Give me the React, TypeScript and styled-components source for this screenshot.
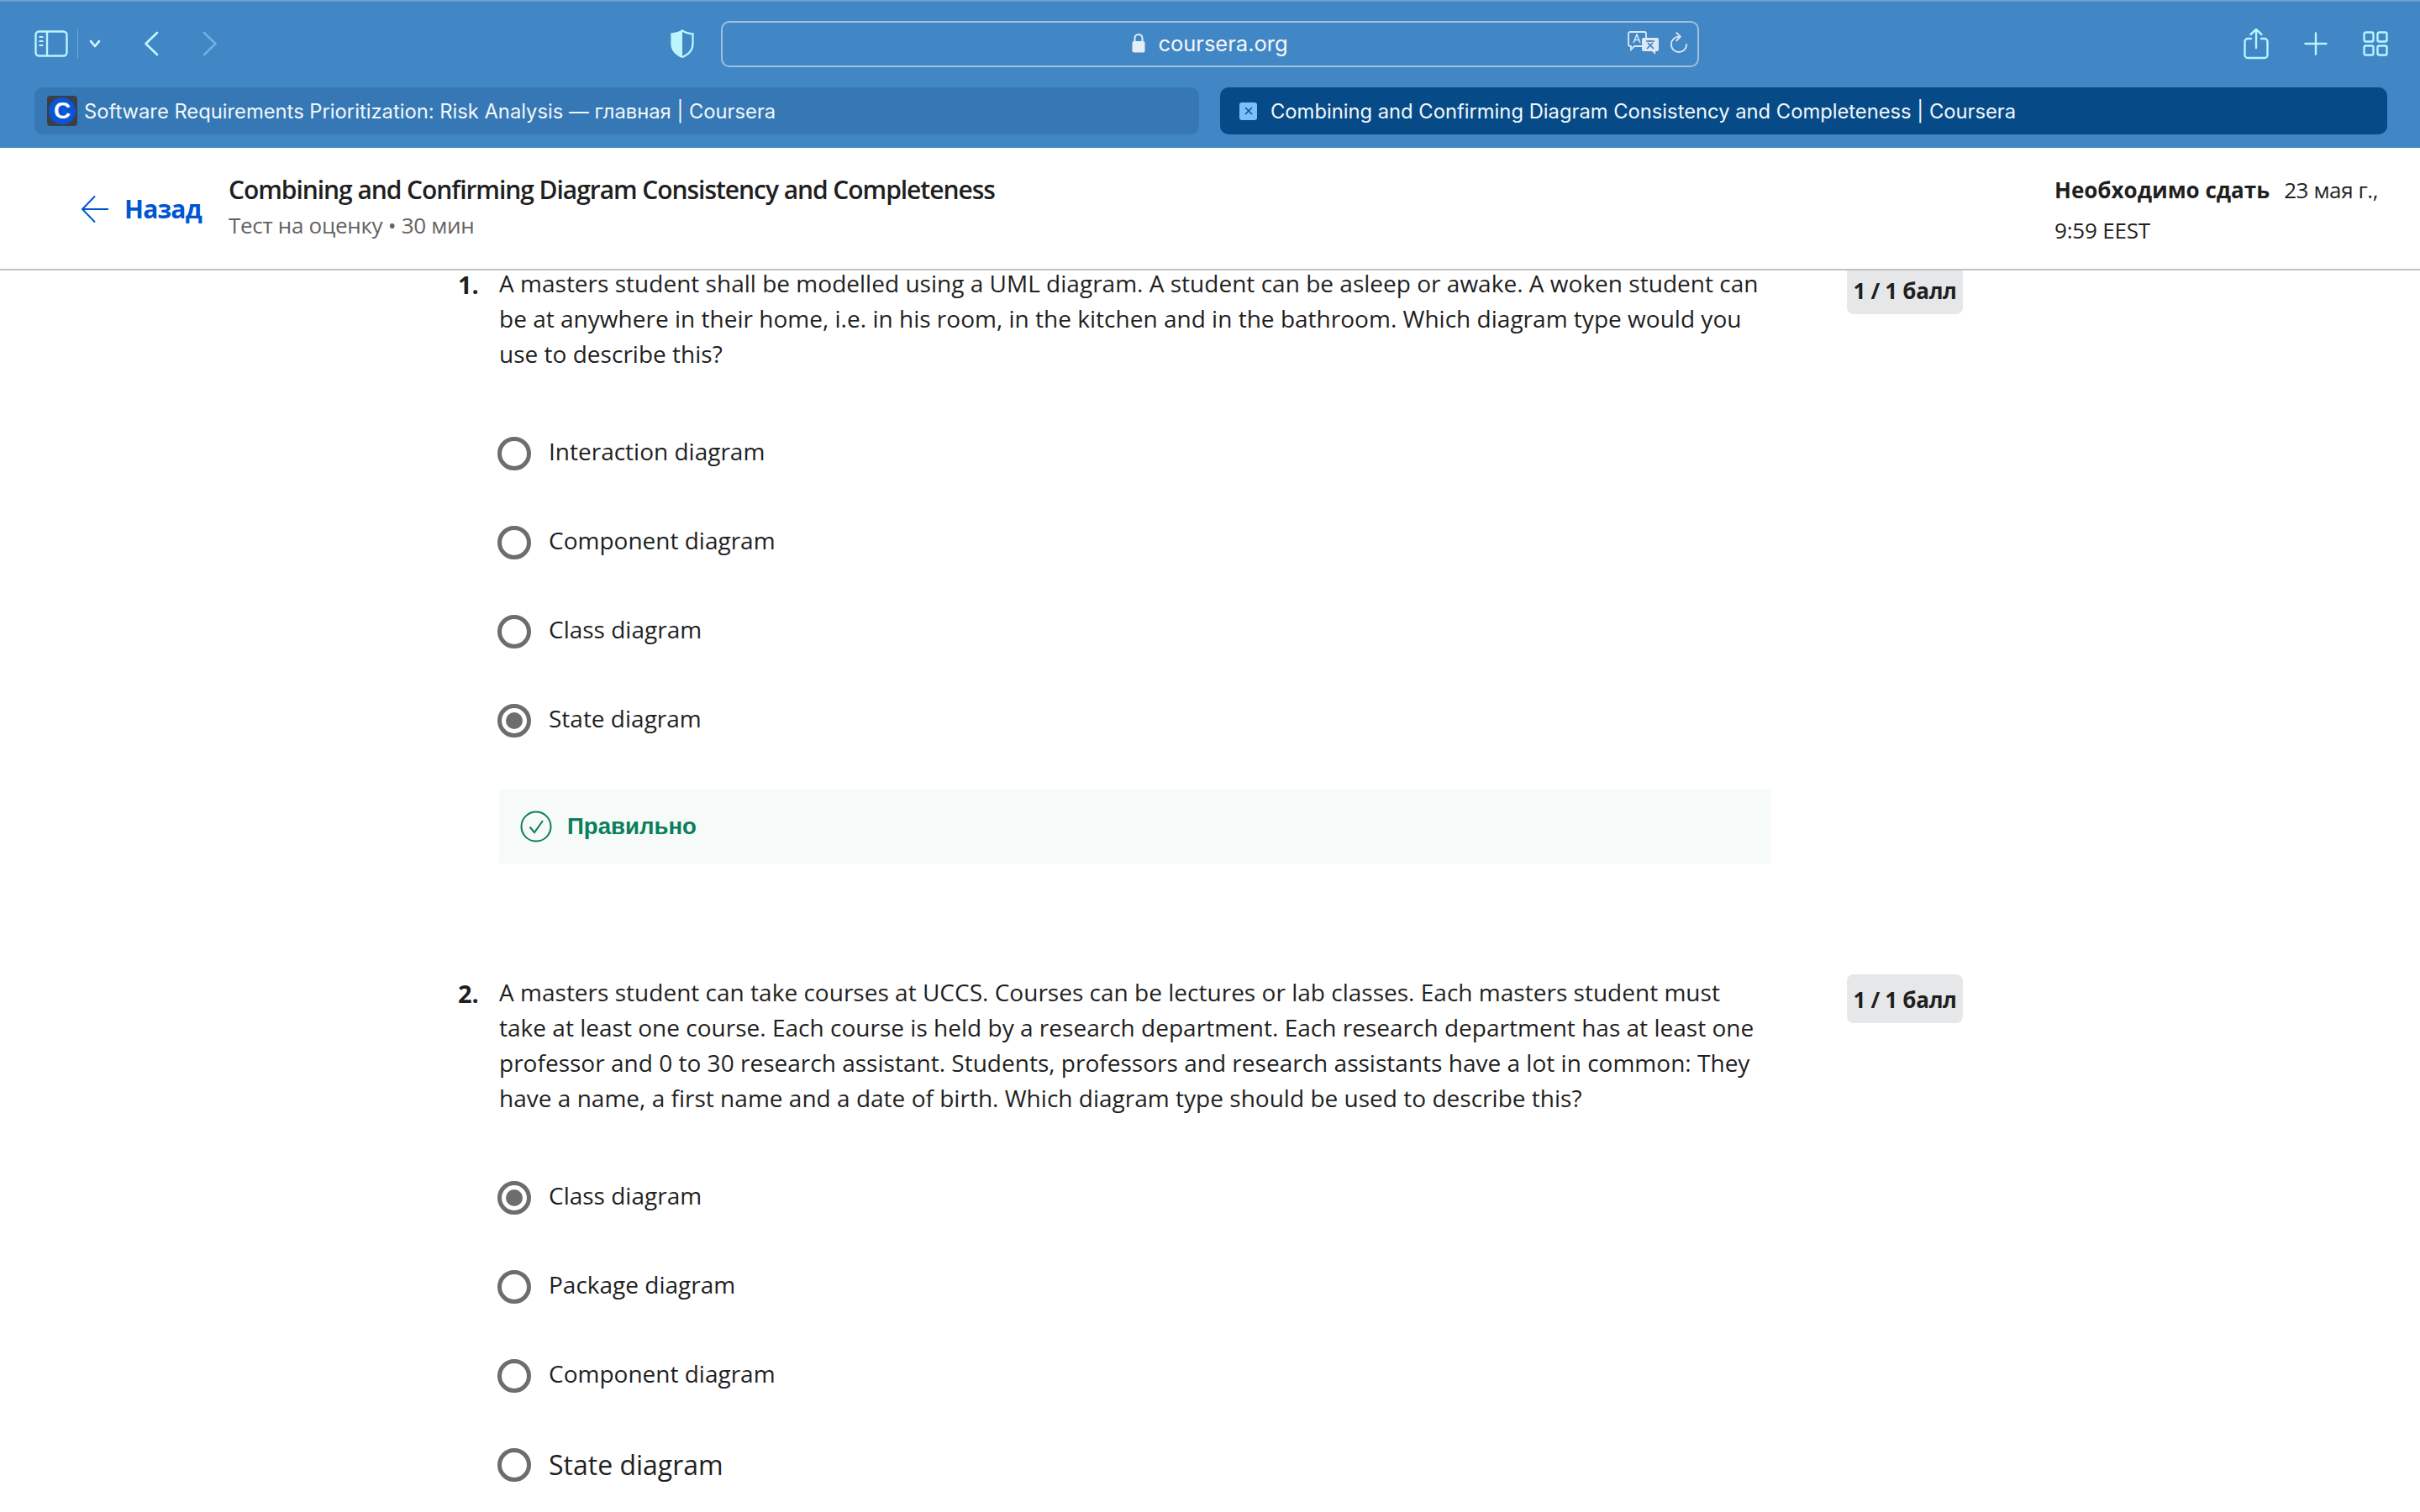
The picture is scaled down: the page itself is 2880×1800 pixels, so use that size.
import React from 'react';
import styled, { createGlobalStyle } from 'styled-components';

const GlobalStyle = createGlobalStyle`
  html, body {
    margin: 0;
    padding: 0;
    background: #fff;
  }
  * {
    box-sizing: border-box;
  }
`;

type Choice = { label: string; selected?: boolean; large?: boolean };

type QuestionData = {
  number: string;
  lines: string[];
  choices: Choice[];
  correct?: boolean;
};

const questions: QuestionData[] = [
  {
    number: '1.',
    lines: [
      'A masters student shall be modelled using a UML diagram. A student can be asleep or awake. A woken student can',
      'be at anywhere in their home, i.e. in his room, in the kitchen and in the bathroom. Which diagram type would you',
      'use to describe this?',
    ],
    choices: [
      { label: 'Interaction diagram' },
      { label: 'Component diagram' },
      { label: 'Class diagram' },
      { label: 'State diagram', selected: true },
    ],
    correct: true,
  },
  {
    number: '2.',
    lines: [
      'A masters student can take courses at UCCS. Courses can be lectures or lab classes. Each masters student must',
      'take at least one course. Each course is held by a research department. Each research department has at least one',
      'professor and 0 to 30 research assistant. Students, professors and research assistants have a lot in common: They',
      'have a name, a first name and a date of birth. Which diagram type should be used to describe this?',
    ],
    choices: [
      { label: 'Class diagram', selected: true },
      { label: 'Package diagram' },
      { label: 'Component diagram' },
      { label: 'State diagram', large: true },
    ],
  },
];

const App: React.FC = () => (
  <Page>
    <GlobalStyle />
    <Chrome>
      <Toolbar>
        <ToolGroup>
          <svg width="40" height="32" viewBox="0 0 40 32" fill="none" stroke="#b8f4ff" strokeWidth="2.4">
            <rect x="1.5" y="1.5" width="37" height="29" rx="4" />
            <path d="M15 2v28" />
            <path d="M5.5 8h5M5.5 13h5M5.5 18h5" strokeWidth="2" />
          </svg>
          <ToolDivider />
          <svg width="14" height="10" viewBox="0 0 14 10" fill="none" stroke="#d8f8ff" strokeWidth="2.6" strokeLinecap="round" strokeLinejoin="round">
            <path d="M2 2l5 6 5-6" />
          </svg>
          <NavIcon width="18" height="30" viewBox="0 0 18 30" fill="none" stroke="#c4f5ff" strokeWidth="2.6" strokeLinecap="round" strokeLinejoin="round">
            <path d="M16 2L2.5 15 16 28" />
          </NavIcon>
          <NavIcon $forward width="18" height="30" viewBox="0 0 18 30" fill="none" stroke="#6fb0e4" strokeWidth="2.6" strokeLinecap="round" strokeLinejoin="round">
            <path d="M2 2l13.5 13L2 28" />
          </NavIcon>
        </ToolGroup>
        <ShieldSlot>
          <svg width="28" height="34" viewBox="0 0 28 34">
            <path d="M14 1.5c3.5 2.4 7.5 3.5 12.5 3.8v12C26.500 25 21 30 14 33 7 30 1.500 25 1.500 17.300V5.300C6.500 5 10.500 3.900 14 1.500z" fill="none" stroke="#bdf5ff" strokeWidth="2.2" />
            <path d="M14 1.500C10.500 3.900 6.500 5 1.500 5.300v12C1.500 25 7 30 14 33z" fill="#bdf5ff" />
          </svg>
        </ShieldSlot>
        <AddressBar>
          <AddressCenter>
            <svg width="16" height="24" viewBox="0 0 16 24">
              <path d="M3.500 11V6.500a4.500 4.500 0 0 1 9 0V11" fill="none" stroke="#e3eef8" strokeWidth="2" />
              <rect x="0.500" y="10" width="15" height="13.500" rx="2" fill="#e3eef8" />
            </svg>
            <AddressText>coursera.org</AddressText>
          </AddressCenter>
          <AddressActions>
            <svg width="38" height="28" viewBox="0 0 38 28">
              <path d="M3 1h17a2 2 0 0 1 2 2v13a2 2 0 0 1-2 2H8l-4 4v-4H3a2 2 0 0 1-2-2V3a2 2 0 0 1 2-2z" fill="none" stroke="#dbe9f6" strokeWidth="1.800" />
              <path d="M7 14l4-10 4 10M8.500 10.500h5" fill="none" stroke="#dbe9f6" strokeWidth="1.500" />
              <path d="M19 8h16a2 2 0 0 1 2 2v12a2 2 0 0 1-2 2h-2v4l-4-4H19a2 2 0 0 1-2-2V10a2 2 0 0 1 2-2z" fill="#dbe9f6" />
              <path d="M22 12h10M27 11v2M23 21l7-7M24 14l7 7" fill="none" stroke="#3c78b0" strokeWidth="1.500" />
            </svg>
            <svg width="22" height="26" viewBox="0 0 24 28" fill="none" stroke="#dbe9f6" strokeWidth="2" strokeLinecap="round" strokeLinejoin="round">
              <path d="M12 6a10 10 0 1 0 10 10" />
              <path d="M9 1l5 5-5 5" />
            </svg>
          </AddressActions>
        </AddressBar>
        <ToolGroupRight>
          <svg width="30" height="38" viewBox="0 0 30 38" fill="none" stroke="#b8f4ff" strokeWidth="2.400" strokeLinecap="round" strokeLinejoin="round">
            <path d="M9 13H5a3.500 3.500 0 0 0-3.500 3.500v16A3.500 3.500 0 0 0 5 36h20a3.500 3.500 0 0 0 3.500-3.500v-16A3.500 3.500 0 0 0 25 13h-4" />
            <path d="M15 24V2M8.500 8L15 2l6.500 6" />
          </svg>
          <svg width="28" height="28" viewBox="0 0 28 28" fill="none" stroke="#b8f4ff" strokeWidth="2.400" strokeLinecap="round">
            <path d="M14 1.500v25M1.500 14h25" />
          </svg>
          <svg width="30" height="30" viewBox="0 0 30 30" fill="none" stroke="#b8f4ff" strokeWidth="2.400">
            <rect x="1.500" y="1.500" width="11" height="11" rx="2" />
            <rect x="17.500" y="1.500" width="11" height="11" rx="2" />
            <rect x="1.500" y="17.500" width="11" height="11" rx="2" />
            <rect x="17.500" y="17.500" width="11" height="11" rx="2" />
          </svg>
        </ToolGroupRight>
      </Toolbar>
      <TabBar>
        <Tab>
          <CourseraFavicon>
            <span>C</span>
          </CourseraFavicon>
          <TabLabel>Software Requirements Prioritization: Risk Analysis — главная | Coursera</TabLabel>
        </Tab>
        <Tab $active>
          <ClosedFavicon>
            <svg width="12" height="12" viewBox="0 0 12 12" fill="none" stroke="#20507f" strokeWidth="1.600">
              <path d="M2 2l8 8M10 2l-8 8" />
            </svg>
          </ClosedFavicon>
          <TabLabel>Combining and Confirming Diagram Consistency and Completeness | Coursera</TabLabel>
        </Tab>
      </TabBar>
    </Chrome>

    <Header>
      <BackLink>
        <svg width="34" height="34" viewBox="0 0 34 34" fill="none" stroke="#0056d2" strokeWidth="2">
          <path d="M17 1.500L2 17l15 15.500M2 17h31" />
        </svg>
        <BackLabel>Назад</BackLabel>
      </BackLink>
      <TitleBlock>
        <Title>Combining and Confirming Diagram Consistency and Completeness</Title>
        <Subtitle>Тест на оценку • 30 мин</Subtitle>
      </TitleBlock>
      <DueBlock>
        <DueLabel>Необходимо сдать</DueLabel>
        <DueDate>23 мая г.,</DueDate>
        <DueTime>9:59 EEST</DueTime>
      </DueBlock>
    </Header>

    <Content>
      {questions.map((question) => (
        <Question key={question.number}>
          <QuestionNumber>{question.number}</QuestionNumber>
          <QuestionBody>
            <Prompt>
              {question.lines.map((line) => (
                <PromptLine key={line}>{line}</PromptLine>
              ))}
            </Prompt>
            <Choices>
              {question.choices.map((choice) => (
                <ChoiceRow key={choice.label}>
                  <Radio $selected={choice.selected} />
                  <ChoiceLabel $large={choice.large}>{choice.label}</ChoiceLabel>
                </ChoiceRow>
              ))}
            </Choices>
            {question.correct && (
              <Feedback>
                <svg width="38" height="38" viewBox="0 0 38 38" fill="none" stroke="#0b7e5a" strokeWidth="2">
                  <circle cx="19" cy="19" r="17.500" />
                  <path d="M11.500 19.500l5.500 6.500 10-14" />
                </svg>
                <FeedbackText>Правильно</FeedbackText>
              </Feedback>
            )}
          </QuestionBody>
          <Grade>1 / 1 балл</Grade>
        </Question>
      ))}
    </Content>
  </Page>
);

const Page = styled.div`
  width: 2880px;
  height: 1800px;
  overflow: hidden;
  background: #fff;
  display: flex;
  flex-direction: column;
`;

const Chrome = styled.div`
  height: 176px;
  flex: none;
  background: #4287c5;
  border-top: 2px solid #6a9fd2;
  position: relative;
  z-index: 2;
`;

const Toolbar = styled.div`
  height: 102px;
  display: flex;
  align-items: center;
  padding-bottom: 2px;
`;

const ToolGroup = styled.div`
  width: 797px;
  padding-left: 41px;
  display: flex;
  align-items: center;
`;

const ToolDivider = styled.div`
  width: 1px;
  height: 36px;
  margin: 0 13px 0 11px;
  background: #6fa9dd;
`;

const NavIcon = styled.svg<{ $forward?: boolean }>`
  margin-left: ${(p) => (p.$forward ? '52px' : '51px')};
`;

const ShieldSlot = styled.div`
  width: 61px;
  padding-left: 1px;
  display: flex;
`;

const AddressBar = styled.div`
  position: relative;
  width: 1164px;
  height: 55px;
  display: flex;
  align-items: center;
  justify-content: center;
  border: 2px solid #9cc1e2;
  border-radius: 10px;
`;

const AddressCenter = styled.div`
  display: flex;
  align-items: center;
  gap: 15px;
  margin-bottom: 2px;
`;

const AddressText = styled.span`
  font-family: Inter, 'Liberation Sans', sans-serif;
  font-size: 25.500px;
  color: #f2f7fb;
`;

const AddressActions = styled.div`
  position: absolute;
  right: 11px;
  top: 10px;
  display: flex;
  align-items: center;
  gap: 12px;
`;

const ToolGroupRight = styled.div`
  margin-left: 648px;
  display: flex;
  align-items: center;
  gap: 42px;
`;

const TabBar = styled.div`
  display: grid;
  grid-template-columns: 1386px 1389px;
  gap: 25px;
  padding-left: 41px;
`;

const Tab = styled.div<{ $active?: boolean }>`
  height: 56px;
  display: flex;
  align-items: center;
  padding-left: ${(p) => (p.$active ? '23px' : '15px')};
  border-radius: 10px;
  background: ${(p) => (p.$active ? '#064b88' : '#3578b5')};
`;

const TabLabel = styled.span`
  font-family: Inter, 'Liberation Sans', sans-serif;
  font-size: 23.750px;
  color: #f2f7fb;
  white-space: nowrap;
`;

const CourseraFavicon = styled.div`
  width: 36px;
  height: 36px;
  margin-right: 8px;
  border-radius: 4px;
  background: #3b3f47;
  display: flex;
  align-items: center;
  justify-content: center;

  span {
    width: 32px;
    height: 32px;
    border-radius: 50%;
    background: #0a55d6;
    color: #fff;
    font-family: 'Liberation Sans', sans-serif;
    font-weight: 700;
    font-size: 28px;
    line-height: 32px;
    text-align: center;
  }
`;

const ClosedFavicon = styled.div`
  width: 21px;
  height: 21px;
  margin-right: 16px;
  border-radius: 3px;
  background: #7cc0fb;
  display: flex;
  align-items: center;
  justify-content: center;
`;

const Header = styled.header`
  height: 146px;
  flex: none;
  position: relative;
  z-index: 1;
  display: flex;
  background: #fff;
  border-bottom: 2px solid #c2c2c2;
`;

const BackLink = styled.div`
  width: 272px;
  padding: 56px 0 0 96px;
  display: flex;
  align-items: flex-start;
  gap: 18px;
`;

const BackLabel = styled.span`
  font-family: 'Open Sans', 'Liberation Sans', sans-serif;
  font-weight: 700;
  font-size: 30px;
  line-height: 44px;
  margin-top: -5px;
  letter-spacing: -0.800px;
  color: #0056d2;
`;

const TitleBlock = styled.div`
  width: 1400px;
  padding-top: 28px;
`;

const Title = styled.div`
  font-family: 'Open Sans', sans-serif;
  font-weight: 600;
  font-size: 30px;
  line-height: 44px;
  letter-spacing: -1.050px;
  color: #1f1f1f;
  white-space: nowrap;
`;

const Subtitle = styled.div`
  font-family: 'Open Sans', sans-serif;
  font-size: 26px;
  line-height: 40px;
  letter-spacing: -0.300px;
  color: #636363;
  white-space: nowrap;
`;

const DueBlock = styled.div`
  margin-left: 773px;
  width: 400px;
  padding-top: 26px;
  font-family: 'Open Sans', sans-serif;
  font-size: 26px;
  line-height: 48px;
  color: #1f1f1f;
`;

const DueLabel = styled.span`
  font-weight: 700;
  margin-right: 17px;
`;

const DueDate = styled.span`
  letter-spacing: -0.400px;
`;

const DueTime = styled.div`
  letter-spacing: -0.200px;
`;

const Content = styled.main`
  flex: 1;
  margin-top: -7px;
  padding-left: 545px;
  display: flex;
  flex-direction: column;
  gap: 131px;
`;

const Question = styled.section`
  display: flex;
  align-items: flex-start;
`;

const QuestionNumber = styled.div`
  width: 49px;
  padding-top: 2px;
  font-family: 'Open Sans', sans-serif;
  font-weight: 700;
  font-size: 29px;
  line-height: 44px;
  color: #1f1f1f;
`;

const QuestionBody = styled.div`
  width: 1513px;
  padding-top: 1px;
`;

const Prompt = styled.div`
  font-family: 'Open Sans', sans-serif;
  font-size: 28px;
  line-height: 42px;
  letter-spacing: 0.015px;
  color: #1f1f1f;
`;

const PromptLine = styled.div`
  white-space: nowrap;
`;

const Choices = styled.div`
  margin-top: 45px;
  margin-bottom: 29px;
`;

const ChoiceRow = styled.div`
  height: 106px;
  display: flex;
  align-items: center;
  gap: 21px;
`;

const Radio = styled.span<{ $selected?: boolean }>`
  width: 40px;
  height: 40px;
  margin-left: -2px;
  flex: none;
  border: 5px solid #6d6d6d;
  border-radius: 50%;
  display: flex;
  align-items: center;
  justify-content: center;

  &::after {
    content: '';
    display: ${(p) => (p.$selected ? 'block' : 'none')};
    width: 20px;
    height: 20px;
    border-radius: 50%;
    background: #6d6d6d;
  }
`;

const ChoiceLabel = styled.span<{ $large?: boolean }>`
  font-family: 'Open Sans', sans-serif;
  font-size: ${(p) => (p.$large ? '32px' : '28px')};
  margin-top: ${(p) => (p.$large ? '-2px' : '-6px')};
  color: #1f1f1f;
`;

const Feedback = styled.div`
  height: 88px;
  padding-left: 25px;
  display: flex;
  align-items: center;
  gap: 18px;
  background: #f6faf9;
`;

const FeedbackText = styled.span`
  font-family: 'Liberation Sans', sans-serif;
  font-weight: 700;
  font-size: 27.600px;
  color: #0b7e5a;
`;

const Grade = styled.div`
  margin: 1px 0 0 91px;
  width: 138px;
  height: 58px;
  padding-top: 2px;
  display: flex;
  align-items: center;
  justify-content: center;
  border-radius: 8px;
  background: #e6e7e9;
  font-family: 'Open Sans', sans-serif;
  font-weight: 700;
  font-size: 26px;
  letter-spacing: -0.300px;
  color: #1f1f1f;
  white-space: nowrap;
`;

export default App;
